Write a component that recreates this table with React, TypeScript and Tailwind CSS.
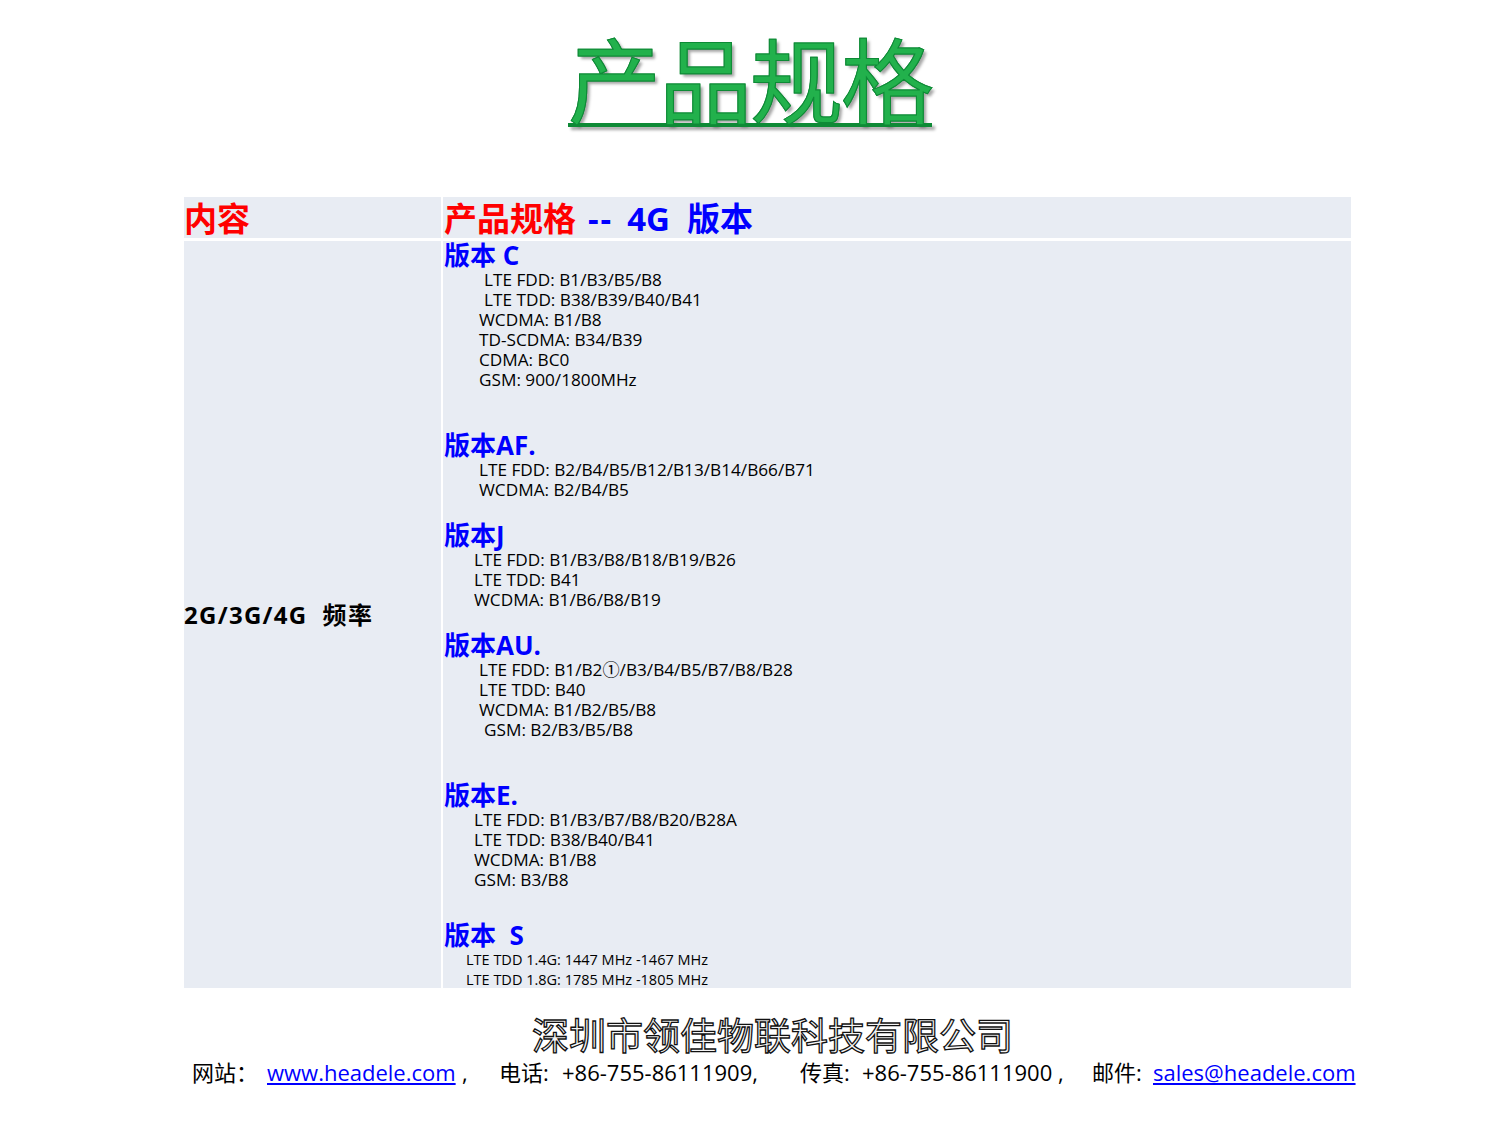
const sans = "font-['Open_Sans','Noto_Sans_CJK_SC',sans-serif]";

type Section = {
  title: string;
  gapTop: number;
  lines: { text: string; indent: number }[];
  small?: boolean;
};

const sections: Section[] = [
  {
    title: "版本 C",
    gapTop: 0,
    lines: [
      { text: "LTE FDD: B1/B3/B5/B8", indent: 40 },
      { text: "LTE TDD: B38/B39/B40/B41", indent: 40 },
      { text: "WCDMA: B1/B8", indent: 35 },
      { text: "TD-SCDMA: B34/B39", indent: 35 },
      { text: "CDMA: BC0", indent: 35 },
      { text: "GSM: 900/1800MHz", indent: 35 },
    ],
  },
  {
    title: "版本AF.",
    gapTop: 41,
    lines: [
      { text: "LTE FDD: B2/B4/B5/B12/B13/B14/B66/B71", indent: 35 },
      { text: "WCDMA: B2/B4/B5", indent: 35 },
    ],
  },
  {
    title: "版本J",
    gapTop: 21,
    lines: [
      { text: "LTE FDD: B1/B3/B8/B18/B19/B26", indent: 30 },
      { text: "LTE TDD: B41", indent: 30 },
      { text: "WCDMA: B1/B6/B8/B19", indent: 30 },
    ],
  },
  {
    title: "版本AU.",
    gapTop: 21,
    lines: [
      { text: "LTE FDD: B1/B2①/B3/B4/B5/B7/B8/B28", indent: 35 },
      { text: "LTE TDD: B40", indent: 35 },
      { text: "WCDMA: B1/B2/B5/B8", indent: 35 },
      { text: "GSM: B2/B3/B5/B8", indent: 40 },
    ],
  },
  {
    title: "版本E.",
    gapTop: 41,
    lines: [
      { text: "LTE FDD: B1/B3/B7/B8/B20/B28A", indent: 30 },
      { text: "LTE TDD: B38/B40/B41", indent: 30 },
      { text: "WCDMA: B1/B8", indent: 30 },
      { text: "GSM: B3/B8", indent: 30 },
    ],
  },
  {
    title: "版本  S",
    gapTop: 31,
    small: true,
    lines: [
      { text: "LTE TDD 1.4G: 1447 MHz -1467 MHz", indent: 22 },
      { text: "LTE TDD 1.8G: 1785 MHz -1805 MHz", indent: 22 },
    ],
  },
];

const App = () => {
  return (
    <div className={`w-[1500px] h-[1125px] bg-white overflow-hidden ${sans}`}>
      {/* Title */}
      <div className="pt-[22px] h-[197px] flex justify-center">
        <h1 className="text-[93px] leading-[110px] font-normal text-[#22b14c] underline decoration-[4px] underline-offset-[6px] tracking-[-2px] [text-shadow:3px_3px_3px_rgba(0,0,0,0.35)] [-webkit-text-stroke:1px_#0e8a36] font-['Noto_Sans_CJK_SC',sans-serif]">
          产品规格
        </h1>
      </div>

      {/* Table */}
      <div className="ml-[184px] w-[1167px] grid grid-cols-[257px_1fr] gap-x-[2px] gap-y-[3px]">
        <div className="bg-[#e8ecf3] h-[41px] flex items-center">
          <span className="text-[33px] font-bold text-[#ff0000] leading-none pt-[2px]">内容</span>
        </div>
        <div className="bg-[#e8ecf3] h-[41px] flex items-center pl-[1px]">
          <span className="text-[33px] font-bold leading-none pt-[2px] whitespace-pre">
            <span className="text-[#ff0000]">产品规格</span>
            <span className="text-[#0000ff] ml-[12px] tracking-[2px]">--</span>
            <span className="text-[#0000ff] ml-[14px]">4G</span>
            <span className="text-[#0000ff] ml-[17px]">版本</span>
          </span>
        </div>

        <div className="bg-[#e8ecf3] h-[747px] flex items-center">
          <span className="text-[24px] font-bold text-black whitespace-pre tracking-[1.3px]">2G/3G/4G  频率</span>
        </div>
        <div className="bg-[#e8ecf3] h-[747px] pl-[1px] overflow-visible">
          {sections.map((s) => (
            <div key={s.title} style={{ marginTop: s.gapTop }}>
              <div className="text-[26px] font-bold text-[#0000ff] leading-[29px] whitespace-pre">{s.title}</div>
              {s.lines.map((l) => (
                <div
                  key={l.text}
                  className={s.small ? "text-[14.5px] leading-[20px] text-black whitespace-pre" : "text-[17.2px] leading-[20px] text-black whitespace-pre"}
                  style={{ paddingLeft: l.indent }}
                >
                  {l.text}
                </div>
              ))}
            </div>
          ))}
        </div>
      </div>

      {/* Footer */}
      <div className="mt-[24px] flex justify-center">
        <div className="text-[37px] leading-[44px] text-[#f4f4f4] [-webkit-text-stroke:1.3px_#111] font-['Noto_Sans_CJK_SC',sans-serif] pl-[45px]">
          深圳市领佳物联科技有限公司
        </div>
      </div>
      <div className="ml-[192px] mt-[1px] text-[22px] leading-[30px] text-black whitespace-pre flex items-baseline">
        <span className="w-[75px]">网站：</span>
        <span className="w-[195px]">
          <span className="text-[#0000ff] underline">www.headele.com</span>
        </span>
        <span className="w-[37px]">,</span>
        <span className="w-[63px]">电话:</span>
        <span className="w-[238px]">+86-755-86111909,</span>
        <span className="w-[62px]">传真:</span>
        <span className="w-[230px]">+86-755-86111900 ,</span>
        <span className="w-[61px]">邮件:</span>
        <span className="text-[#0000ff] underline">sales@headele.com</span>
      </div>
    </div>
  );
};

export default App;
